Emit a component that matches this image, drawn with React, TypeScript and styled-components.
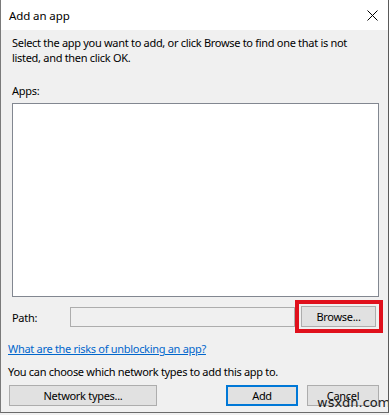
import React from "react";
import styled, { createGlobalStyle } from "styled-components";

const Global = createGlobalStyle`
  html, body { margin: 0; padding: 0; background: #f0f0f0; }
  body { font-family: "Noto Sans", "Open Sans", sans-serif; font-size: 11px; letter-spacing: -0.3px; color: #000; }
`;

const Window = styled.div`
  position: relative;
  width: 389px;
  height: 413px;
  box-sizing: border-box;
  border-left: 1px solid #7a7a7a;
  border-right: 1px solid #5a5a5a;
  border-bottom: 1px solid #6a6a6a;
  background: #f0f0f0;
  display: flex;
  flex-direction: column;
  overflow: hidden;
`;

const TitleBar = styled.div`
  height: 30px;
  background: #ffffff;
  display: flex;
  align-items: center;
  justify-content: space-between;
  padding: 0 10px 0 8px;
  flex-shrink: 0;
`;

const Title = styled.span`
  font-size: 11.5px;
  letter-spacing: -0.1px;
  line-height: 15px;
  margin-top: 1px;
`;

const Close = styled.svg`
  width: 11px;
  height: 11px;
  margin-top: 1px;
`;

const Body = styled.div`
  display: flex;
  flex-direction: column;
  padding: 5px 9px 0 11px;
`;

const Text = styled.p<{ $indent?: number; $top?: number }>`
  margin: ${(p) => p.$top ?? 0}px 0 0 ${(p) => p.$indent ?? 0}px;
  line-height: 15px;
  white-space: pre;
`;

const ListBox = styled.div`
  margin-top: 5px;
  height: 194px;
  flex-shrink: 0;
  background: #ffffff;
  border: 1px solid #828790;
  box-sizing: border-box;
`;

const PathRow = styled.div`
  display: flex;
  align-items: center;
  margin-top: 10px;
  height: 20px;
`;

const PathLabel = styled.span`
  width: 58px;
  line-height: 15px;
`;

const PathInput = styled.div`
  flex: 1;
  height: 20px;
  box-sizing: border-box;
  border: 1px solid #adadad;
  background: #f0f0f0;
`;

const Highlight = styled.div`
  margin-right: -4px;
  padding: 2px 3px 2px 2px;
  border: 4px solid #e0101c;
  display: flex;
  position: relative;
  top: -1px;
`;

const Button = styled.div<{ $width: number; $primary?: boolean }>`
  width: ${(p) => p.$width}px;
  height: 21px;
  box-sizing: border-box;
  border: ${(p) => (p.$primary ? "2px solid #0078d7" : "1px solid #adadad")};
  background: #e1e1e1;
  display: flex;
  align-items: center;
  justify-content: center;
  line-height: 15px;
`;

const Link = styled.a`
  align-self: flex-start;
  margin: 14px 0 0 -4px;
  color: #0066cc;
  text-decoration: underline;
  line-height: 15px;
`;

const ButtonRow = styled.div`
  display: flex;
  align-items: center;
  margin: 6px 0 0 -3px;
`;

const Spacer = styled.div`
  flex: 1;
`;

const Gap = styled.div<{ $w: number }>`
  width: ${(p) => p.$w}px;
`;

const Watermark = styled.span`
  position: absolute;
  left: 316px;
  top: 395px;
  font-family: "DejaVu Sans", sans-serif;
  font-size: 13px;
  letter-spacing: 0;
  line-height: 15px;
  color: #222;
`;

export default function App() {
  return (
    <>
      <Global />
      <Window>
        <TitleBar>
          <Title>Add an app</Title>
          <Close viewBox="0 0 11 11">
            <path d="M0.5 0.5 L10.5 10.5 M10.5 0.5 L0.5 10.5" stroke="#000" strokeWidth="1" fill="none" />
          </Close>
        </TitleBar>
        <Body>
          <Text>
            {"Select the app you want to add, or click Browse to find one that is not\nlisted, and then click OK."}
          </Text>
          <Text $top={18}>Apps:</Text>
          <ListBox />
          <PathRow>
            <PathLabel>Path:</PathLabel>
            <PathInput />
            <Highlight>
              <Button $width={75}>Browse...</Button>
            </Highlight>
          </PathRow>
          <Link href="#">What are the risks of unblocking an app?</Link>
          <Text $indent={-4} $top={8}>You can choose which network types to add this app to.</Text>
          <ButtonRow>
            <Button $width={148}>Network types...</Button>
            <Spacer />
            <Button $width={72} $primary>Add</Button>
            <Gap $w={9} />
            <Button $width={72}>Cancel</Button>
            <Gap $w={-1} />
          </ButtonRow>
        </Body>
        <Watermark>wsxdn.com</Watermark>
      </Window>
    </>
  );
}
